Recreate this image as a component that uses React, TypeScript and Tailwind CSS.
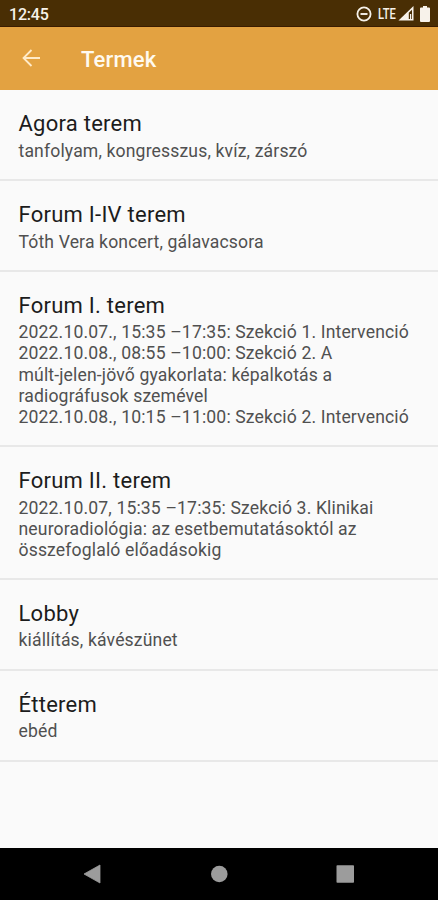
interface Room {
  name: string;
  lines: string[];
}

const ROOMS: Room[] = [
  { name: 'Agora terem', lines: ['tanfolyam, kongresszus, kvíz, zárszó'] },
  { name: 'Forum I-IV terem', lines: ['Tóth Vera koncert, gálavacsora'] },
  {
    name: 'Forum I. terem',
    lines: [
      '2022.10.07., 15:35 –17:35: Szekció 1. Intervenció',
      '2022.10.08., 08:55 –10:00: Szekció 2. A',
      'múlt-jelen-jövő gyakorlata: képalkotás a',
      'radiográfusok szemével',
      '2022.10.08., 10:15 –11:00: Szekció 2. Intervenció',
    ],
  },
  {
    name: 'Forum II. terem',
    lines: [
      '2022.10.07, 15:35 –17:35: Szekció 3. Klinikai',
      'neuroradiológia: az esetbemutatásoktól az',
      'összefoglaló előadásokig',
    ],
  },
  { name: 'Lobby', lines: ['kiállítás, kávészünet'] },
  { name: 'Étterem', lines: ['ebéd'] },
];

function StatusBar() {
  return (
    <div className="h-[27px] shrink-0 bg-[#492e04] border-b border-[#3a1c00] text-[#f7f2ea] flex items-center justify-between pl-[9px] pr-[8px]">
      <span className="text-[16px] font-medium leading-none tracking-[-0.2px] pt-[3px]">12:45</span>
      <div className="flex items-center pt-px">
        <svg className="w-[16px] h-[16px] mr-[6px]" viewBox="0 0 16 16" fill="none" stroke="currentColor">
          <circle cx="8" cy="8" r="6.6" strokeWidth="1.8" />
          <path d="M4.500 8h7" strokeWidth="1.9" />
        </svg>
        <span className="w-[20px] text-[14px] font-medium leading-none pt-px origin-left scale-x-[0.8]">LTE</span>
        <svg className="w-[16px] h-[15px] mr-[6px]" viewBox="0 0 16 15">
          <path d="M0.500 14.500L15.500 0V14.500Z" fill="currentColor" />
          {/* unfilled part of the signal wedge */}
          <path d="M10.800 6.800L14 3.700V13H10.800Z" fill="#492e04" />
          <path d="M12 8h1.200v5h-1.200z" fill="currentColor" />
        </svg>
        <svg className="w-[10px] h-[16px]" viewBox="0 0 10 16" fill="currentColor">
          <path d="M3 0h4v1.600h2a1 1 0 0 1 1 1V15a1 1 0 0 1-1 1H1a1 1 0 0 1-1-1V2.600a1 1 0 0 1 1-1h2z" />
        </svg>
      </div>
    </div>
  );
}

function RoomRow({ room }: { room: Room }) {
  return (
    <li className="border-b-2 border-[#e8e8e8] px-[18.5px] pt-[20px] pb-[17.3px]">
      <h2 className="text-[22px] leading-[28px] tracking-[0.25px] text-[#1c1c1c]">{room.name}</h2>
      <div className="text-[17.6px] leading-[21.1px] tracking-[0.14px] pt-[2.4px] text-[#505050]">
        {room.lines.map(line => (
          <p key={line} className="whitespace-nowrap">{line}</p>
        ))}
      </div>
    </li>
  );
}

export default function App() {
  return (
    <div className="w-full h-screen flex flex-col overflow-hidden bg-[#fafafa] font-['Roboto',sans-serif]">
      <StatusBar />
      <header className="h-[62.5px] shrink-0 bg-[#e3a241] text-[#fffaf0] flex items-center pl-[22px]">
        <svg className="w-[18px] h-[18px] mr-[41px] mb-px text-[#ffebc9]" viewBox="0 0 18 18" fill="none" stroke="currentColor" strokeWidth="1.8">
          <path d="M18 9H2M9.500 1L1.500 9L9.500 17" />
        </svg>
        <h1 className="text-[22px] font-medium leading-none tracking-[0.15px] pt-[3px]">Termek</h1>
      </header>
      <ul className="flex-1 pt-[0.9px]">
        {ROOMS.map(room => (
          <RoomRow key={room.name} room={room} />
        ))}
      </ul>
      <nav className="h-[52.5px] shrink-0 bg-black text-[#9c9c9c]">
        <svg className="w-full h-[52px]" viewBox="0 0 438 52" fill="currentColor">
          <path d="M84 26L100 17V35Z" stroke="currentColor" strokeWidth="0.8" strokeLinejoin="round" />
          <circle cx="219.300" cy="26" r="8.300" />
          <rect x="336.500" y="17.300" width="17.500" height="17.500" rx="0.800" />
        </svg>
      </nav>
    </div>
  );
}
